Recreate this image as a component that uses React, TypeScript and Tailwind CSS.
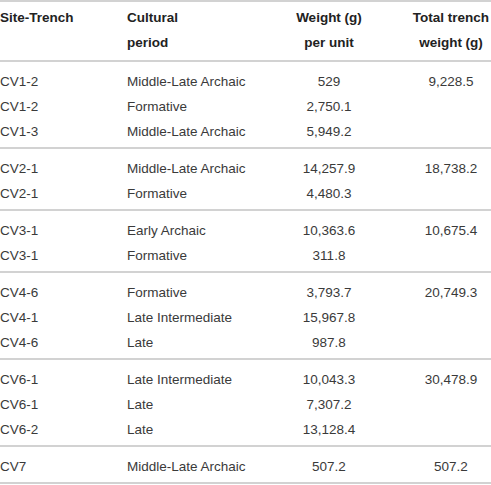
import React from 'react';

type Row = [string, string, string, string?];

const groups: Row[][] = [
  [
    ['CV1-2', 'Middle-Late Archaic', '529', '9,228.5'],
    ['CV1-2', 'Formative', '2,750.1'],
    ['CV1-3', 'Middle-Late Archaic', '5,949.2'],
  ],
  [
    ['CV2-1', 'Middle-Late Archaic', '14,257.9', '18,738.2'],
    ['CV2-1', 'Formative', '4,480.3'],
  ],
  [
    ['CV3-1', 'Early Archaic', '10,363.6', '10,675.4'],
    ['CV3-1', 'Formative', '311.8'],
  ],
  [
    ['CV4-6', 'Formative', '3,793.7', '20,749.3'],
    ['CV4-1', 'Late Intermediate', '15,967.8'],
    ['CV4-6', 'Late', '987.8'],
  ],
  [
    ['CV6-1', 'Late Intermediate', '10,043.3', '30,478.9'],
    ['CV6-1', 'Late', '7,307.2'],
    ['CV6-2', 'Late', '13,128.4'],
  ],
  [['CV7', 'Middle-Late Archaic', '507.2', '507.2']],
];

const cols = 'grid grid-cols-[127px_160px_84px_1fr]';

const App = () => {
  return (
    <div className="w-[491px] bg-white text-[13.5px] leading-[25px] text-[#3a3a3a] font-['Liberation_Sans',Arial,sans-serif]">
      <div className="border-t-2 border-b-2 border-[#d2d2d2] pt-[3px] pb-[5px] font-bold text-[#222]">
        <div className={cols}>
          <div>Site-Trench</div>
          <div>
            Cultural
            <br />
            period
          </div>
          <div className="text-center whitespace-nowrap">
            Weight (g)
            <br />
            per unit
          </div>
          <div className="pl-[40px] text-center whitespace-nowrap">
            Total trench
            <br />
            weight (g)
          </div>
        </div>
      </div>

      {groups.map((g, gi) => (
        <div key={gi} className="border-b-2 border-[#d2d2d2] pt-[7px] pb-[3px]">
          {g.map((r, ri) => (
            <div key={ri} className={cols}>
              <div>{r[0]}</div>
              <div className="whitespace-nowrap">{r[1]}</div>
              <div className="text-center">{r[2]}</div>
              <div className="pl-[40px] text-center">{r[3] ?? ''}</div>
            </div>
          ))}
        </div>
      ))}
    </div>
  );
};

export default App;
